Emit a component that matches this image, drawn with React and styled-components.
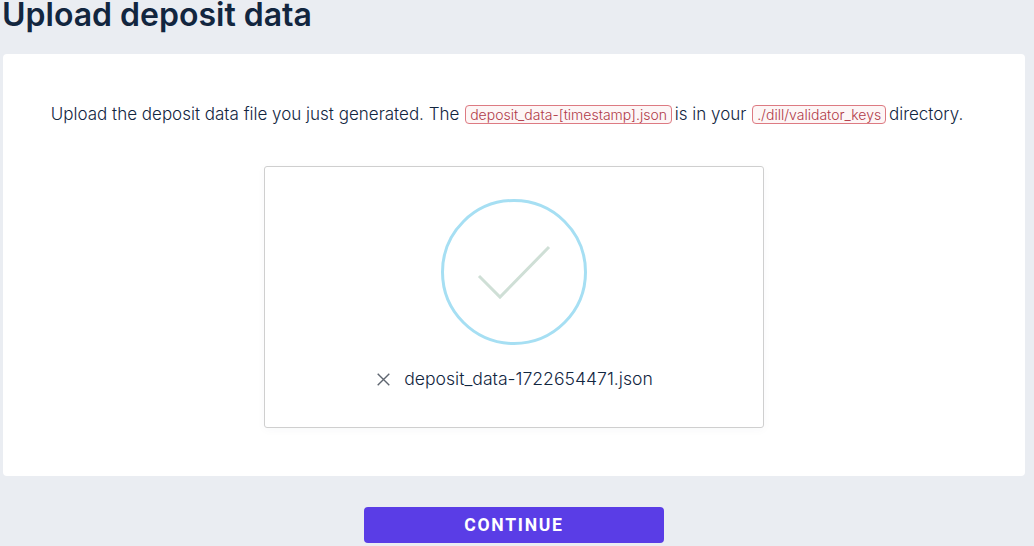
import styled, { createGlobalStyle } from "styled-components";

const GlobalStyle = createGlobalStyle`
  html, body {
    margin: 0;
    height: 546px;
    overflow: hidden;
    background: #eaedf2;
  }
  body {
    font-family: Inter, "Liberation Sans", sans-serif;
    color: #12263f;
  }
`;

const Page = styled.div`
  display: flex;
  flex-direction: column;
  padding: 0 9px 0 3px;
  height: 546px;
  box-sizing: border-box;
`;

const Title = styled.h1`
  margin: 0 0 0 -1px;
  height: 54px;
  font-size: 32px;
  line-height: 30px;
  font-weight: 600;
  color: #12263f;
`;

const Card = styled.section`
  height: 422px;
  background: #fff;
  border-radius: 4px;
  padding-top: 46px;
  box-sizing: border-box;
  display: flex;
  flex-direction: column;
  align-items: center;
`;

const Intro = styled.p`
  margin: 0 14px 0 0;
  font-size: 17px;
  line-height: 28px;
  font-weight: 300;
  white-space: nowrap;
`;

const Code = styled.code`
  font-family: Inter, "Liberation Sans", sans-serif;
  font-size: 14px;
  font-weight: 300;
  color: #b03a48;
  background: #fdf6f6;
  border: 1px solid #dd7a82;
  border-radius: 4px;
  padding: 0 4px;
  margin: 0 -2px 0 1px;
`;

const Dropzone = styled.div`
  margin-top: 37px;
  width: 500px;
  height: 262px;
  box-sizing: border-box;
  background: #fff;
  border: 1px solid #cfcfcf;
  border-radius: 3px;
  box-shadow: 0 2px 10px rgba(30, 50, 90, 0.03);
  display: flex;
  flex-direction: column;
  align-items: center;
  padding-top: 31px;
`;

const CheckIcon = styled.svg`
  display: block;
`;

const FileRow = styled.div`
  margin-top: 21px;
  padding-left: 2px;
  display: flex;
  align-items: center;
  gap: 14px;
  font-size: 17.6px;
  font-weight: 300;
  line-height: 24px;
`;

const Footer = styled.div`
  display: flex;
  justify-content: center;
  padding-top: 31px;
`;

const ContinueButton = styled.button`
  width: 300px;
  height: 36px;
  border: 0;
  border-radius: 4px;
  background: #5a3de6;
  color: #fff;
  font-family: Roboto, "Liberation Sans", sans-serif;
  font-size: 17.6px;
  font-weight: 700;
  letter-spacing: 1.7px;
`;

export default function App() {
  return (
    <Page>
      <GlobalStyle />
      <Title>Upload deposit data</Title>
      <Card>
        <Intro>
          Upload the deposit data file you just generated. The{" "}
          <Code>deposit_data-[timestamp].json</Code> is in your{" "}
          <Code>./dill/validator_keys</Code> directory.
        </Intro>
        <Dropzone>
          <CheckIcon width="148" height="148" viewBox="0 0 148 148" fill="none">
            <circle cx="74" cy="74" r="71.5" stroke="#a6dff3" strokeWidth="3" />
            <path d="M39 78 L60 99 L109 49" stroke="#cfdfd6" strokeWidth="3" />
          </CheckIcon>
          <FileRow>
            <svg width="13" height="13" viewBox="0 0 13 13" fill="none">
              <path d="M0.7 0.7 L12.3 12.3 M12.3 0.7 L0.7 12.3" stroke="#5f6670" strokeWidth="1.4" />
            </svg>
            deposit_data-1722654471.json
          </FileRow>
        </Dropzone>
      </Card>
      <Footer>
        <ContinueButton>CONTINUE</ContinueButton>
      </Footer>
    </Page>
  );
}
